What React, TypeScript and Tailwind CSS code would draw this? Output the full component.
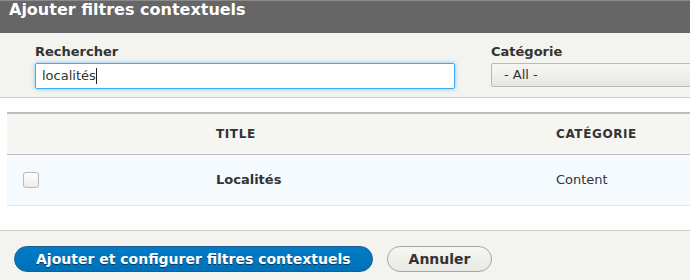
import React from "react";

const FONT = "font-['DejaVu_Sans','Liberation_Sans',sans-serif]";

export default function App() {
  return (
    <div className={`${FONT} w-[690px] h-[280px] overflow-hidden bg-white text-[#333]`}>
      <div className="w-[760px]">
        {/* Dialog title */}
        <div className="h-[33px] bg-[#666] border-t border-[#8a8a8a] pl-[9px]">
          <h1 className="text-[16px] leading-[17px] font-bold text-white">Ajouter filtres contextuels</h1>
        </div>

        {/* Exposed filters */}
        <div className="flex gap-[36px] bg-[#f3f3ef] border-b border-[#cfcfcb] pl-[35px] pt-[10px] pb-[8px]">
          <div className="flex flex-col gap-[2px]">
            <label className="text-[13px] leading-[18px] font-bold">Rechercher</label>
            <div className="w-[420px] h-[26px] flex items-center px-[6px] bg-white border border-[#40a8f0] rounded-[2px] shadow-[0_0_4px_#7cc4f5] text-[13px]">
              <span>localités</span>
              <span className="w-px h-[16px] bg-[#222]" />
            </div>
          </div>
          <div className="flex flex-col gap-[2px]">
            <label className="text-[13px] leading-[18px] font-bold">Catégorie</label>
            <div className="w-[240px] h-[24px] flex items-center px-[12px] border border-[#b8b8b8] rounded-[2px] bg-gradient-to-b from-[#f6f6f3] to-[#e7e7e2] text-[13px]">
              - All -
            </div>
          </div>
        </div>

        {/* Results table */}
        <div className="pt-[14px] pb-[24px] pl-[7px]">
          <div className="border-t-2 border-[#bfbfbf]">
            <div className="flex h-[41px] items-center bg-[#f5f5f2] border-b border-[#bfbfbf] text-[12px] font-bold uppercase tracking-[0.6px]">
              <div className="w-[197px]" />
              <div className="w-[340px] pl-[12px]">Title</div>
              <div className="pl-[12px]">Catégorie</div>
            </div>
            <div className="flex h-[51px] items-center bg-[#f5faff] border-b border-[#e6e4df] text-[13px]">
              <div className="w-[197px] pl-[16px]">
                <div className="w-[16px] h-[16px] rounded-[3px] border border-[#b8b8b8] bg-gradient-to-b from-white to-[#ececea]" />
              </div>
              <div className="w-[340px] pl-[12px] font-bold">Localités</div>
              <div className="pl-[12px]">Content</div>
            </div>
          </div>
        </div>

        {/* Button pane */}
        <div className="h-[60px] bg-[#f3f3ef] border-t border-[#cfcfcb] pl-[14px] pt-[15px] flex gap-[14px] items-start">
          <button className="h-[26px] px-[21px] rounded-full border border-[#1e5c90] bg-gradient-to-b from-[#007bc6] to-[#0071b8] text-white text-[14px] font-bold [text-shadow:0_1px_rgba(0,0,0,0.5)]">
            Ajouter et configurer filtres contextuels
          </button>
          <button className="h-[26px] px-[21px] rounded-full border border-[#a6a6a6] bg-gradient-to-b from-[#f6f6f3] to-[#e8e8e4] text-[#333] text-[14px] font-bold">
            Annuler
          </button>
        </div>
      </div>
    </div>
  );
}
